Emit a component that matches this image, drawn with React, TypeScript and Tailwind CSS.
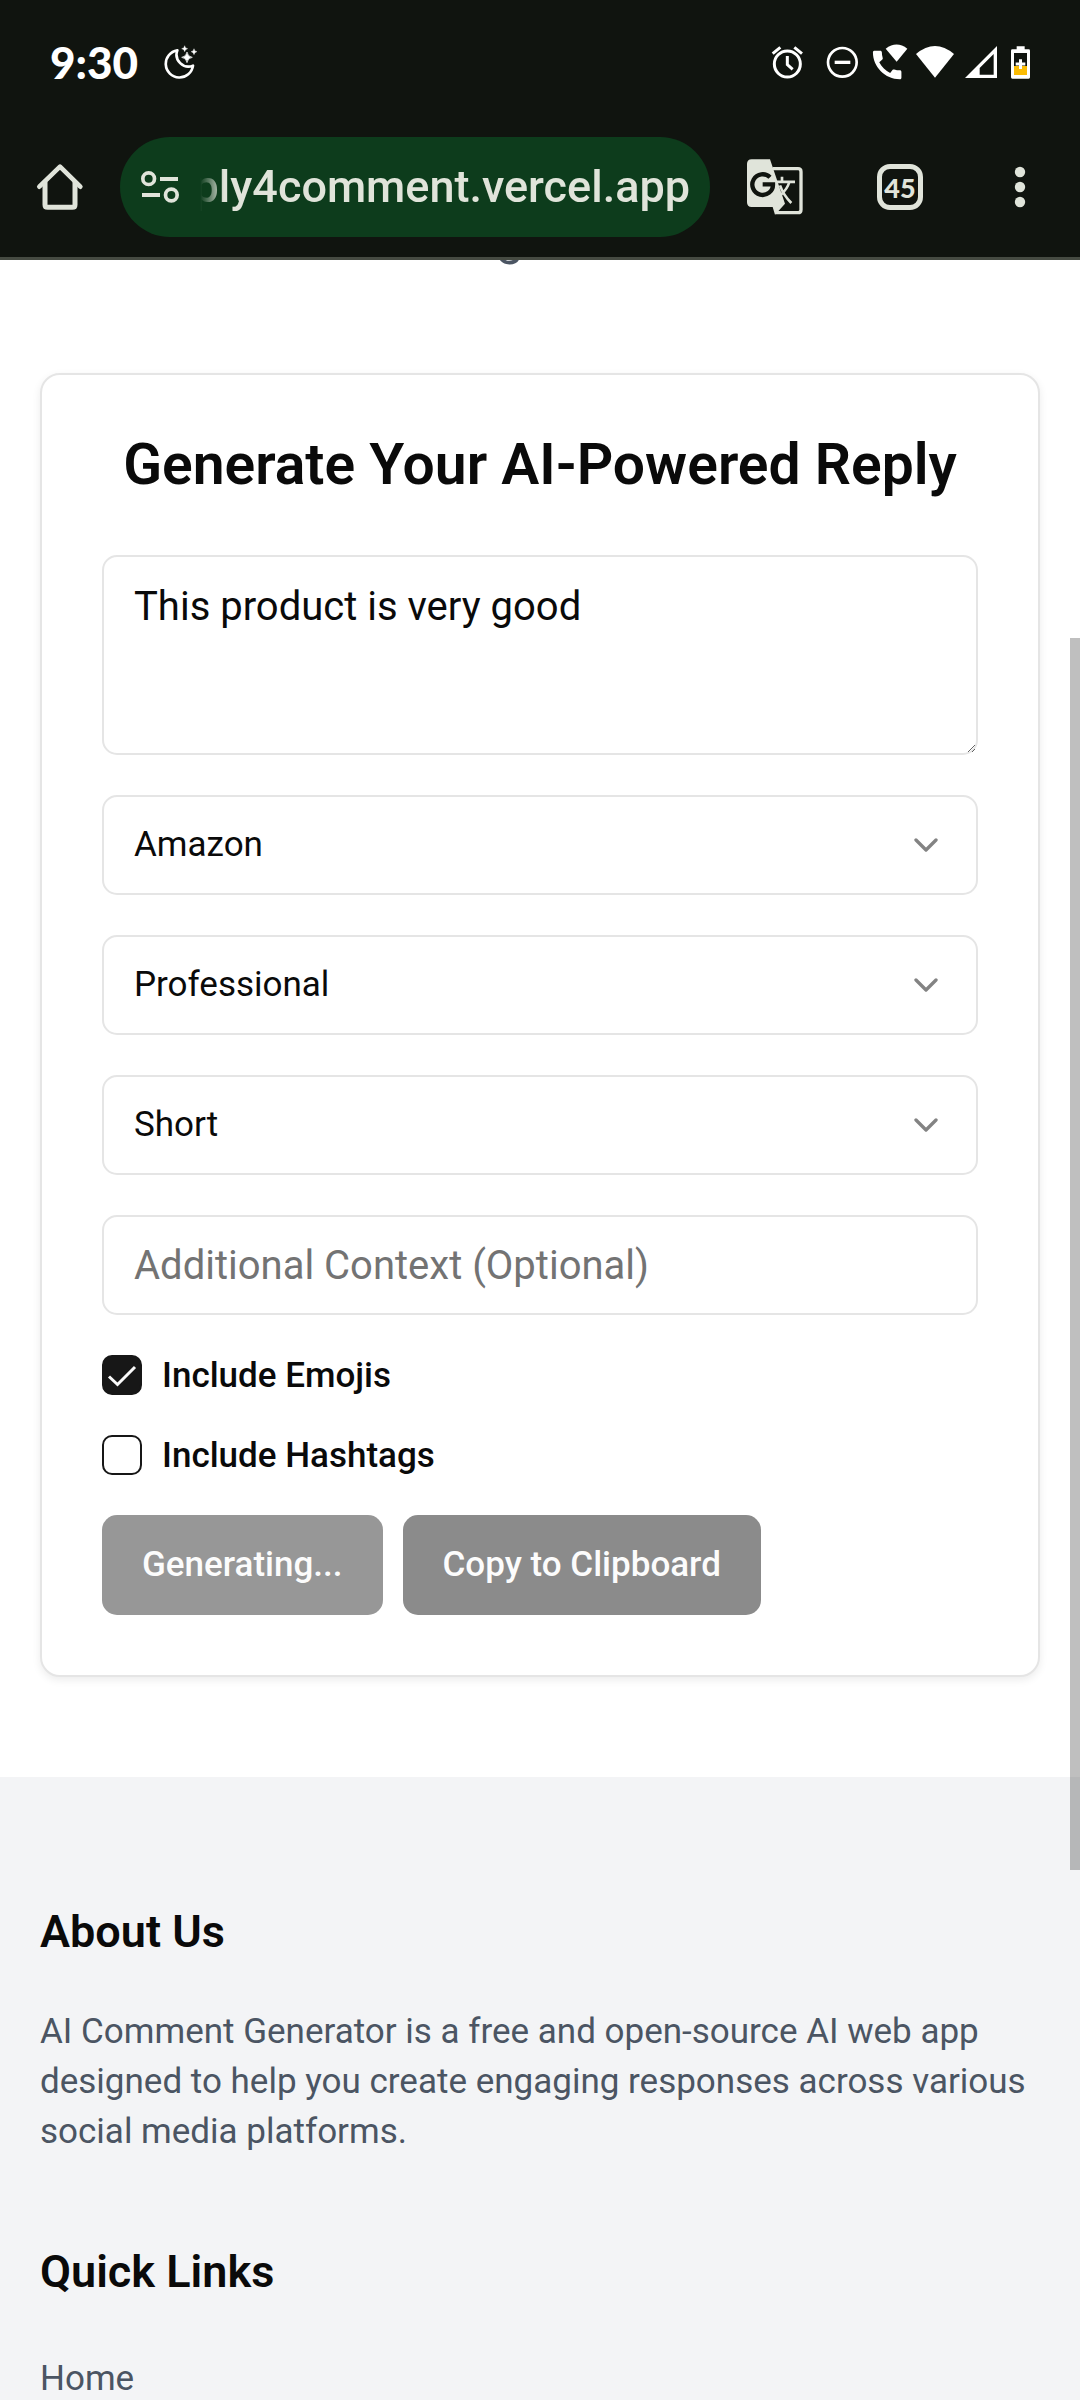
import { ChevronDown } from "lucide-react";
import type { ReactNode } from "react";

function StatusBar() {
  return (
    <div className="flex h-[124px] items-center pl-[50px] pr-[49px] text-white">
      <span className="font-[Lato] text-[44px] leading-none font-black">9:30</span>
      <svg className="ml-[26px] h-[34px] w-[34px]" viewBox="495 138 102 102" fill="none" aria-hidden="true">
        <path d="M535 154A41 41 0 1 0 582 200A36 36 0 0 1 535 154Z" stroke="currentColor" strokeWidth="8" strokeLinejoin="round" />
        <path d="M564 159Q566 173 580 175Q566 177 564 191Q562 177 548 175Q562 173 564 159Z" fill="currentColor" stroke="currentColor" strokeWidth="2" />
        <path d="M557 140Q558 148 566 149Q558 150 557 158Q556 150 548 149Q556 148 557 140Z" fill="currentColor" stroke="currentColor" strokeWidth="1" />
        <path d="M585 149Q586 157 594 158Q586 159 585 167Q584 159 576 158Q584 157 585 149Z" fill="currentColor" stroke="currentColor" strokeWidth="1" />
      </svg>
      <div className="ml-auto flex items-center">
        <svg className="h-[33px] w-[33px]" viewBox="153 138 99 99" fill="none" stroke="currentColor" aria-hidden="true">
          <circle cx="202" cy="192" r="39" strokeWidth="9" />
          <path d="M202 168V194L218 208" strokeWidth="9" />
          <path d="M158 161L181 142M246 161L223 142" strokeWidth="9" />
        </svg>
        <svg className="ml-[22px] h-[33px] w-[33px]" viewBox="318 138 99 99" fill="none" stroke="currentColor" aria-hidden="true">
          <circle cx="367" cy="187" r="43" strokeWidth="8" />
          <path d="M344 187H391" strokeWidth="10" />
        </svg>
        <svg className="ml-[13px] h-[36px] w-[36px]" viewBox="456 135 108 108" fill="currentColor" aria-hidden="true">
          <path
            transform="translate(444.500 141) scale(4.750)"
            d="M20.010 15.380c-1.230 0-2.420-.2-3.530-.56-.35-.12-.74-.03-1.010.24l-1.570 1.970c-2.830-1.350-5.480-3.900-6.890-6.830l1.950-1.660c.27-.28.35-.67.24-1.020-.37-1.110-.56-2.300-.56-3.530 0-.54-.45-.99-.99-.99H4.190C3.650 3 3 3.240 3 3.990 3 13.280 10.730 21 20.010 21c.71 0 .99-.63.99-1.180v-3.450c0-.54-.45-.99-.99-.99z"
          />
          <path d="M530 188L497 149Q530 124 562 149Z" />
        </svg>
        <svg className="ml-[7px] h-[33px] w-[40px]" viewBox="585 138 120 99" fill="currentColor" aria-hidden="true">
          <path d="M645 233L588 162Q645 114 702 162Z" />
        </svg>
        <svg className="ml-[9px] h-[33px] w-[34px]" viewBox="732 138 102 99" fill="currentColor" aria-hidden="true">
          <path fillRule="evenodd" d="M735 234L831 138V234ZM779 224H821V162L779 204Z" />
        </svg>
        <svg className="ml-[12px] h-[33px] w-[21px]" viewBox="870 138 63 99" aria-hidden="true">
          <path d="M890 148V139H914V148H926Q930 148 930 152V232Q930 236 926 236H877Q873 236 873 232V152Q873 148 877 148Z" fill="#fff" />
          <path d="M882 159H921V198H882Z" fill="#10140f" />
          <path d="M882 198H921V225H882Z" fill="#fbbc04" />
          <path d="M901.500 178V207M887 192H916" stroke="#fff" strokeWidth="9" />
        </svg>
      </div>
    </div>
  );
}

function BrowserBar() {
  return (
    <div className="flex items-center pt-[13px] pr-[53px] pb-[20px] pl-[36px] text-[#e0e4da]">
      <button type="button" aria-label="Home page">
        <svg className="h-[48px] w-[48px]" viewBox="108 489 144 144" fill="none" stroke="currentColor" aria-hidden="true">
          <path d="M135 545V614Q135 622 143 622H217Q225 622 225 614V545" strokeWidth="15" />
          <path d="M118 560L180 500L241 560" strokeWidth="14" strokeLinecap="round" strokeLinejoin="round" />
        </svg>
      </button>
      <div className="ml-[36px] flex h-[100px] min-w-0 flex-1 items-center gap-5 rounded-full bg-[#0d3c1c] px-5">
        <button type="button" aria-label="Site settings" className="shrink-0">
          <svg className="h-[34px] w-[40px]" viewBox="420 510 120 102" fill="none" stroke="currentColor" aria-hidden="true">
            <circle cx="446" cy="536" r="17.500" strokeWidth="11" />
            <path d="M480 537H534M426 585H480" strokeWidth="12" />
            <circle cx="514" cy="585" r="17.500" strokeWidth="11" />
          </svg>
        </button>
        <div className="flex min-w-0 flex-1 justify-end overflow-hidden [mask-image:linear-gradient(to_right,transparent,black_24px)]">
          <span className="text-[45px] leading-[70px] font-medium whitespace-nowrap">ply4comment.vercel.app</span>
        </div>
      </div>
      <button type="button" aria-label="Translate" className="ml-[36px]">
        <svg className="h-[58px] w-[58px]" viewBox="78 474 174 174" fill="none" aria-hidden="true">
          <path d="M158 506H234Q243 506 243 515V629Q243 638 234 638H166" stroke="currentColor" strokeWidth="10" />
          <path d="M186 530V546M167 545.500H225" stroke="currentColor" strokeWidth="8" />
          <path d="M208 546Q202 567 182 585M180 556Q190 585 214 609" stroke="currentColor" strokeWidth="8" />
          <path d="M95 478H150L195 611L165 644L158 621H95Q81 621 81 607V492Q81 478 95 478Z" fill="currentColor" />
          <path d="M150 532A31 31 0 1 0 159 553H128" stroke="#10140f" strokeWidth="13" />
        </svg>
      </button>
      <button
        type="button"
        aria-label="Open tabs"
        className="ml-[73px] flex h-[46px] w-[46px] items-center justify-center rounded-[13px] border-[5px] border-[#e0e4da] font-[Lato] text-[27px] leading-none font-black"
      >
        45
      </button>
      <button type="button" aria-label="More options" className="ml-[90px]">
        <svg className="h-[42px] w-[14px]" viewBox="879 498 42 126" fill="currentColor" overflow="visible" aria-hidden="true">
          <circle cx="900" cy="516" r="15.500" />
          <circle cx="900" cy="561" r="15.500" />
          <circle cx="900" cy="606" r="15.500" />
        </svg>
      </button>
    </div>
  );
}

function SelectField({ label, options }: { label: string; options: string[] }) {
  return (
    <div className="relative">
      <select
        aria-label={label}
        className="block h-[100px] w-full appearance-none rounded-[15px] border-2 border-[#e5e5e5] bg-white px-[30px] text-[35px]"
      >
        {options.map((option) => (
          <option key={option}>{option}</option>
        ))}
      </select>
      <ChevronDown className="pointer-events-none absolute inset-y-0 right-8 my-auto h-10 w-10 opacity-50" aria-hidden="true" />
    </div>
  );
}

function CheckField({ id, checked, children }: { id: string; checked?: boolean; children: ReactNode }) {
  return (
    <div className="flex items-center gap-5">
      <span className="relative h-10 w-10">
        <input
          id={id}
          type="checkbox"
          defaultChecked={checked}
          className="peer block h-10 w-10 appearance-none rounded-[10px] border-2 border-[#171717] bg-white checked:bg-[#171717]"
        />
        <svg
          className="pointer-events-none absolute inset-0 hidden h-10 w-10 text-[#fafafa] peer-checked:block"
          viewBox="0 0 40 40"
          fill="none"
          stroke="currentColor"
          strokeWidth="3"
          aria-hidden="true"
        >
          <path d="M7 21.500L15.500 29.500L33 12" />
        </svg>
      </span>
      <label htmlFor={id} className="text-[35px] leading-none font-medium">
        {children}
      </label>
    </div>
  );
}

function ReplyForm() {
  return (
    <section className="rounded-[20px] border-2 border-[#e5e5e5] bg-white p-[60px] shadow-[0_3px_8px_rgba(0,0,0,0.08)]">
      <h2 className="text-center text-[57px] leading-[60px] font-semibold whitespace-nowrap">Generate Your AI-Powered Reply</h2>
      <form className="mt-[60px] flex flex-col gap-10" onSubmit={(event) => event.preventDefault()}>
        <textarea
          aria-label="Comment"
          defaultValue="This product is very good"
          className="block h-[200px] w-full resize-y rounded-[15px] border-2 border-[#e5e5e5] bg-white px-[30px] py-5 text-[40px] leading-[60px]"
        />
        <SelectField label="Platform" options={["Amazon"]} />
        <SelectField label="Tone" options={["Professional"]} />
        <SelectField label="Length" options={["Short"]} />
        <input
          type="text"
          aria-label="Additional Context"
          placeholder="Additional Context (Optional)"
          className="block h-[100px] w-full rounded-[15px] border-2 border-[#e5e5e5] bg-white px-[30px] text-[40px] placeholder:text-[#737373]"
        />
        <CheckField id="emojis" checked>
          Include Emojis
        </CheckField>
        <CheckField id="hashtags">Include Hashtags</CheckField>
        <div className="flex gap-5">
          <button type="button" disabled className="h-[100px] rounded-[15px] bg-[#979797] px-10 text-[35px] font-medium text-[#fcfcfc]">
            Generating...
          </button>
          <button type="button" disabled className="h-[100px] rounded-[15px] bg-[#8b8b8b] px-10 text-[35px] font-medium text-[#fcfcfc]">
            Copy to Clipboard
          </button>
        </div>
      </form>
    </section>
  );
}

export default function App() {
  return (
    <div className="relative flex h-screen flex-col overflow-hidden bg-white font-[Roboto,sans-serif] text-[#0a0a0a]">
      <header className="shrink-0 border-b-[3px] border-[#464b42] bg-[#10140f]">
        <StatusBar />
        <BrowserBar />
      </header>

      <main className="shrink-0 px-10 pb-[100px]">
        <div className="flex h-[5px] flex-col justify-end overflow-hidden">
          <p className="pr-[60px] text-center text-[50px] leading-[56px] text-[#4b5563]">g</p>
        </div>
        <div className="pt-[108px]">
          <ReplyForm />
        </div>
      </main>

      <footer className="flex shrink-0 flex-col gap-20 bg-[#f3f4f6] px-10 py-[120px]">
        <section>
          <h3 className="text-[45px] leading-[70px] font-semibold">About Us</h3>
          <p className="mt-10 text-[35px] leading-[50px] text-[#4b5563]">
            AI Comment Generator is a free and open-source AI web app designed to help you create engaging responses across various
            social media platforms.
          </p>
        </section>
        <nav aria-label="Quick Links">
          <h3 className="text-[45px] leading-[70px] font-semibold">Quick Links</h3>
          <ul className="mt-10 text-[40px] leading-[60px] text-[#4b5563]">
            <li>
              <a href="#home" className="text-[35px]">
                Home
              </a>
            </li>
          </ul>
        </nav>
      </footer>

      <div className="absolute top-[638px] right-0 h-[1232px] w-[10px] bg-black/25" aria-hidden="true" />
    </div>
  );
}
